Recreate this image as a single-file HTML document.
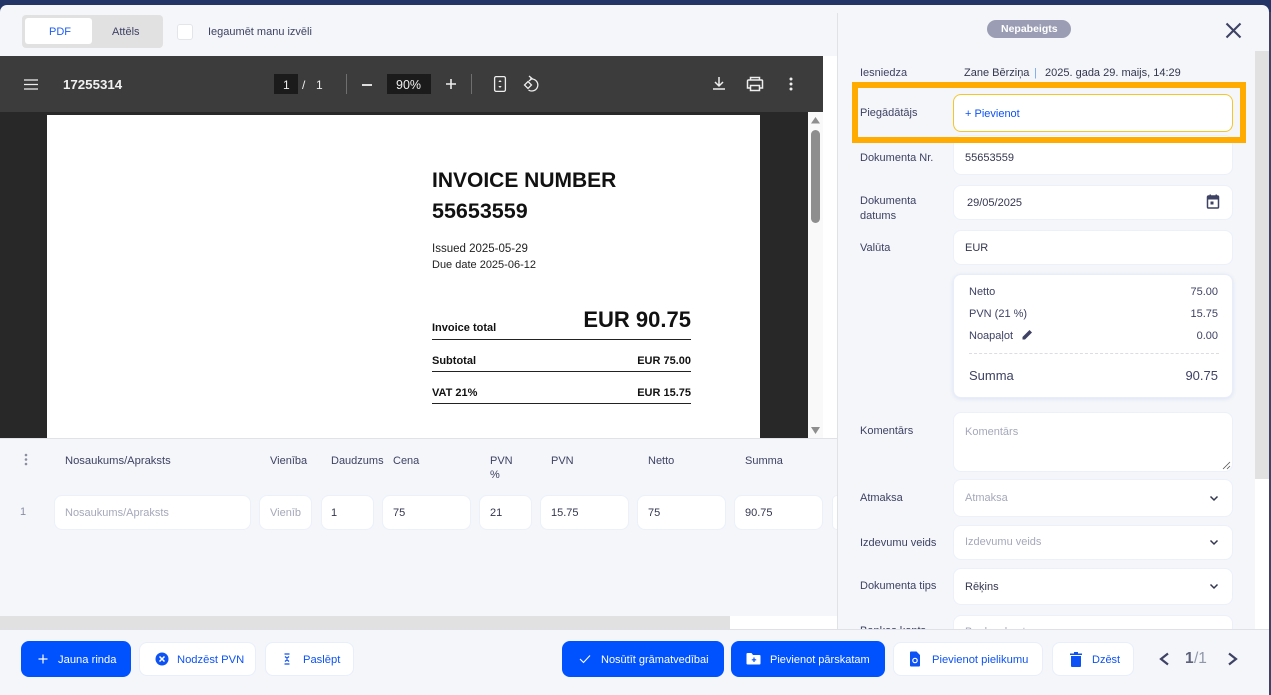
<!DOCTYPE html>
<html lang="lv"><head><meta charset="utf-8"><title>Rēķins</title>
<style>
html,body{margin:0;padding:0}
body{width:1271px;height:695px;overflow:hidden;background:#233466;position:relative;font-family:"Liberation Sans",sans-serif;font-size:11px;color:#3e4264}
div,span,svg{position:absolute;box-sizing:border-box}
.t{white-space:nowrap;line-height:14px;margin-top:1px}
.n{margin-top:0}
.i{background:#fff;border:1px solid #ebf0fb;border-radius:8px}
.ph{color:#a5a8ba}
.d{color:#33364f}
.b{background:#fff;border:1px solid #e8eefc;border-radius:8px;height:34px;top:642px}
.p{background:#0052ff;border-radius:8px;height:36px;top:641px}
.w{color:#fff;font-weight:400}
.bl{color:#0d52f5}
.inv{font-weight:bold;color:#111;white-space:nowrap}
.ln{background:#222;height:1px;left:432px;width:259px}
</style></head><body>
<div style="left:0;top:5px;width:1269px;height:690px;background:#f4f6f9;border-radius:7px 7px 5px 0"></div>
<div style="left:1269px;top:12px;width:2px;height:683px;background:#3e4264"></div>

<!-- top tabs -->
<div style="left:22px;top:15px;width:141px;height:33px;background:#e1e1e1;border-radius:4px"></div>
<div style="left:25px;top:18px;width:67px;height:26px;background:#fff;border-radius:3px"></div>
<div class="t n" style="left:49px;top:25px;color:#1f5cf5">PDF</div>
<div class="t n" style="left:112px;top:25px">Attēls</div>
<div style="left:177px;top:24px;width:16px;height:16px;background:#fff;border:1px solid #e3e5ea;border-radius:3px"></div>
<div class="t n" style="left:208px;top:25px">Iegaumēt manu izvēli</div>
<div style="left:837px;top:13px;width:1px;height:617px;background:#e0e2e6"></div>

<!-- pdf viewer -->
<div style="left:823px;top:56px;width:14px;height:382px;background:#fff"></div>
<div style="left:0;top:56px;width:823px;height:56px;background:#3c3c3c"></div>
<div style="left:0;top:112px;width:808px;height:326px;background:#282828"></div>
<div style="left:808px;top:112px;width:15px;height:326px;background:#f9f9f9"></div>
<svg style="left:808px;top:112px" width="15" height="326"><path d="M7.500 5 12 11.500H3z" fill="#8e8e8e"/><rect x="3" y="18" width="9" height="93" rx="4.500" fill="#8e8e8e"/><path d="M3 315h9l-4.500 7z" fill="#8e8e8e"/></svg>
<div style="left:47px;top:115px;width:713px;height:323px;background:#fff"></div>
<svg style="left:24px;top:79px" width="15" height="11"><path d="M0 1h14M0 5.500h14M0 10h14" stroke="#eee" stroke-width="1.300"/></svg>
<div class="t n" style="left:63px;top:78px;color:#f1f1f1;font-weight:bold;font-size:13.300px">17255314</div>
<div style="left:274px;top:74px;width:24px;height:20px;background:#1b1b1b"></div>
<div class="t n" style="left:283px;top:78px;color:#eee;font-size:12px">1</div>
<div class="t n" style="left:302px;top:78px;color:#eee;font-size:12px">/</div>
<div class="t n" style="left:316px;top:78px;color:#eee;font-size:12px">1</div>
<div style="left:346px;top:74px;width:1px;height:20px;background:#6f6f6f"></div>
<div style="left:362px;top:84px;width:10px;height:1.500px;background:#ddd"></div>
<div style="left:387px;top:74px;width:44px;height:20px;background:#1b1b1b"></div>
<div class="t n" style="left:396px;top:78px;color:#eee;font-size:12.500px">90%</div>
<svg style="left:445px;top:78px" width="12" height="12"><path d="M6 1v10M1 6h10" stroke="#eee" stroke-width="1.600"/></svg>
<div style="left:471px;top:74px;width:1px;height:20px;background:#6f6f6f"></div>
<svg style="left:492px;top:75px" width="16" height="18"><rect x="2.600" y="1.600" width="10.800" height="14.800" rx="1.500" fill="none" stroke="#eee" stroke-width="1.300"/><path d="M8 5 6.300 7h3.400zM8 13l-1.700-2h3.400z" fill="#eee"/></svg>
<svg style="left:522px;top:75px" width="20" height="18"><path d="M6 1 9 3.500 6 6" transform="translate(1 0)" fill="none" stroke="#eee" stroke-width="1.300"/><path d="M8 4h2a6 6 0 1 1-3.500 11" fill="none" stroke="#eee" stroke-width="1.300"/><path d="M6 6.500 9.500 10 6 13.500 2.500 10z" fill="none" stroke="#eee" stroke-width="1.300"/></svg>
<svg style="left:712px;top:76px" width="14" height="15"><path d="M7 1v8M3 6l4 4 4-4" fill="none" stroke="#eee" stroke-width="1.500"/><path d="M1 13h12" stroke="#eee" stroke-width="1.500"/></svg>
<svg style="left:746px;top:76px" width="18" height="16"><path d="M4.500 4V1.500h9V4M4.500 12H1.500V5a1 1 0 0 1 1-1h13a1 1 0 0 1 1 1v7h-3M4.500 9.500h9v5h-9z" fill="none" stroke="#eee" stroke-width="1.500"/></svg>
<svg style="left:788px;top:77px" width="6" height="14"><circle cx="3" cy="2" r="1.500" fill="#eee"/><circle cx="3" cy="7" r="1.500" fill="#eee"/><circle cx="3" cy="12" r="1.500" fill="#eee"/></svg>

<!-- invoice -->
<div class="inv" style="left:432px;top:166px;font-size:21px;line-height:30px">INVOICE NUMBER</div>
<div class="inv" style="left:432px;top:196px;font-size:21.500px;line-height:30px">55653559</div>
<div class="t" style="left:432px;top:241px;color:#222;font-size:11.500px">Issued 2025-05-29</div>
<div class="t" style="left:432px;top:257px;color:#222;font-size:11px">Due date 2025-06-12</div>
<div class="inv" style="left:432px;top:322px;font-size:11px">Invoice total</div>
<div class="inv" style="right:580px;top:307px;font-size:22px">EUR 90.75</div>
<div class="ln" style="top:339px"></div>
<div class="inv" style="left:432px;top:355px;font-size:11px">Subtotal</div>
<div class="inv" style="right:580px;top:355px;font-size:11px">EUR 75.00</div>
<div class="ln" style="top:371px"></div>
<div class="inv" style="left:432px;top:387px;font-size:11px">VAT 21%</div>
<div class="inv" style="right:580px;top:387px;font-size:11px">EUR 15.75</div>
<div class="ln" style="top:403px"></div>

<!-- table -->
<div style="left:0;top:438px;width:837px;height:1px;background:#e1e2e5"></div>
<svg style="left:23px;top:453px" width="6" height="14"><circle cx="3" cy="2" r="1.300" fill="#8b8ea3"/><circle cx="3" cy="6.500" r="1.300" fill="#8b8ea3"/><circle cx="3" cy="11" r="1.300" fill="#8b8ea3"/></svg>
<div class="t" style="left:65px;top:453px;font-size:11.200px">Nosaukums/Apraksts</div>
<div class="t" style="left:270px;top:453px">Vienība</div>
<div class="t" style="left:331px;top:453px">Daudzums</div>
<div class="t" style="left:393px;top:453px">Cena</div>
<div class="t" style="left:490px;top:453px">PVN</div>
<div class="t" style="left:490px;top:467px">%</div>
<div class="t" style="left:551px;top:453px">PVN</div>
<div class="t" style="left:648px;top:453px">Netto</div>
<div class="t" style="left:745px;top:453px">Summa</div>
<div class="t" style="left:20px;top:504px;color:#8b8ea3">1</div>
<div class="i" style="left:54px;top:495px;width:197px;height:35px"></div>
<div class="t ph" style="left:65px;top:505px">Nosaukums/Apraksts</div>
<div class="i" style="left:259px;top:495px;width:53px;height:35px"></div>
<div class="t ph" style="left:270px;top:505px">Vienīb</div>
<div class="i" style="left:321px;top:495px;width:53px;height:35px"></div>
<div class="t d" style="left:331px;top:505px">1</div>
<div class="i" style="left:382px;top:495px;width:89px;height:35px"></div>
<div class="t d" style="left:393px;top:505px">75</div>
<div class="i" style="left:479px;top:495px;width:53px;height:35px"></div>
<div class="t d" style="left:490px;top:505px">21</div>
<div class="i" style="left:540px;top:495px;width:89px;height:35px"></div>
<div class="t d" style="left:551px;top:505px">15.75</div>
<div class="i" style="left:637px;top:495px;width:89px;height:35px"></div>
<div class="t d" style="left:648px;top:505px">75</div>
<div class="i" style="left:734px;top:495px;width:89px;height:35px"></div>
<div class="t d" style="left:745px;top:505px">90.75</div>
<div class="i" style="left:832px;top:495px;width:5px;height:35px;border-right:0;border-radius:8px 0 0 8px"></div>
<div style="left:0;top:616px;width:730px;height:13px;background:#e1e1e1"></div>
<div style="left:730px;top:616px;width:107px;height:13px;background:#fff"></div>

<!-- right panel -->
<div style="left:987px;top:20px;width:84px;height:18px;border-radius:9px;background:#9a9db4"></div>
<div class="t n" style="left:1001px;top:22px;color:#fff;font-weight:bold;font-size:10.500px">Nepabeigts</div>
<svg style="left:1225px;top:22px" width="17" height="17"><path d="M1.500 1.500l14 14M15.500 1.500l-14 14" stroke="#3e4264" stroke-width="2.100"/></svg>
<div style="left:1255px;top:51px;width:14px;height:428px;background:#e1e1e1"></div>
<div style="left:1255px;top:479px;width:14px;height:150px;background:#fff"></div>

<div class="t" style="left:860px;top:65px">Iesniedza</div>
<div class="t d" style="left:964px;top:65px">Zane Bērziņa</div>
<div class="t" style="left:1034px;top:65px;color:#7aa7e6">|</div>
<div class="t d" style="left:1045px;top:65px">2025. gada 29. maijs, 14:29</div>
<div class="t" style="left:860px;top:105px">Piegādātājs</div>
<div style="left:953px;top:94px;width:280px;height:38px;background:#fff;border:1px solid #f5c52c;border-radius:8px"></div>
<div class="t" style="left:965px;top:106px;color:#0d52f5">+ Pievienot</div>
<div class="i" style="left:953px;top:135px;width:280px;height:40px"></div>
<div style="left:852px;top:82px;width:394px;height:61px;border:6px solid #ffab00"></div>
<div class="t" style="left:860px;top:150px">Dokumenta Nr.</div>
<div class="t d" style="left:965px;top:150px">55653559</div>
<div class="t" style="left:860px;top:193px">Dokumenta</div>
<div class="t" style="left:860px;top:208px">datums</div>
<div class="i" style="left:953px;top:185px;width:280px;height:35px"></div>
<div class="t d" style="left:967px;top:195px">29/05/2025</div>
<svg style="left:1206px;top:194px" width="14" height="15"><path d="M1.500 3a1 1 0 0 1 1-1h9a1 1 0 0 1 1 1v10a1 1 0 0 1-1 1h-9a1 1 0 0 1-1-1z" fill="none" stroke="#3e4264" stroke-width="1.500"/><path d="M1.500 2h11v3.500h-11zM3.500 0.500h1.500v2h-1.500zM9.500 0.500h1.500v2h-1.500zM4.500 7.500h3v3h-3z" fill="#3e4264"/></svg>
<div class="t" style="left:860px;top:240px">Valūta</div>
<div class="i" style="left:953px;top:230px;width:280px;height:35px"></div>
<div class="t d" style="left:965px;top:240px">EUR</div>

<div style="left:953px;top:274px;width:280px;height:124px;background:#fff;border:1px solid #e7edfb;border-radius:8px;box-shadow:0 1px 4px rgba(70,100,200,.12)"></div>
<div class="t" style="left:969px;top:284px">Netto</div>
<div class="t" style="right:53px;top:284px">75.00</div>
<div class="t" style="left:969px;top:306px">PVN (21 %)</div>
<div class="t" style="right:53px;top:306px">15.75</div>
<div class="t" style="left:969px;top:328px">Noapaļot</div>
<svg style="left:1022px;top:329px" width="11" height="11"><path d="M0.500 10.500V8L7.500 1l2.500 2.500-7 7z" fill="#3e4264"/></svg>
<div class="t" style="right:53px;top:328px">0.00</div>
<div style="left:969px;top:353px;width:250px;height:0;border-top:1px dashed #dcdde2"></div>
<div class="t" style="left:969px;top:368px;font-size:13px">Summa</div>
<div class="t" style="right:53px;top:368px;font-size:13px">90.75</div>

<div class="t" style="left:860px;top:423px">Komentārs</div>
<div class="i" style="left:953px;top:412px;width:280px;height:60px"></div>
<div class="t ph" style="left:965px;top:424px">Komentārs</div>
<svg style="left:1222px;top:461px" width="9" height="9"><path d="M1 8 8 1M5 8l3-3" stroke="#555" stroke-width="0.800"/></svg>

<div class="t" style="left:860px;top:490px">Atmaksa</div>
<div class="i" style="left:953px;top:479px;width:280px;height:38px"></div>
<div class="t ph" style="left:965px;top:490px">Atmaksa</div>
<div class="t" style="left:860px;top:535px">Izdevumu veids</div>
<div class="i" style="left:953px;top:525px;width:280px;height:35px"></div>
<div class="t ph" style="left:965px;top:534px">Izdevumu veids</div>
<div class="t" style="left:860px;top:578px">Dokumenta tips</div>
<div class="i" style="left:953px;top:568px;width:280px;height:37px"></div>
<div class="t d" style="left:965px;top:579px">Rēķins</div>
<svg style="left:1209px;top:495px" width="10" height="7"><path d="M1.500 1.500 5 5l3.500-3.500" fill="none" stroke="#33364f" stroke-width="1.500"/></svg>
<svg style="left:1209px;top:539px" width="10" height="7"><path d="M1.500 1.500 5 5l3.500-3.500" fill="none" stroke="#33364f" stroke-width="1.500"/></svg>
<svg style="left:1209px;top:583px" width="10" height="7"><path d="M1.500 1.500 5 5l3.500-3.500" fill="none" stroke="#33364f" stroke-width="1.500"/></svg>
<div class="t" style="left:860px;top:623px">Bankas konts</div>
<div class="i" style="left:953px;top:615px;width:280px;height:36px"></div>
<div class="t ph" style="left:965px;top:624px">Bankas konts</div>

<!-- footer -->
<div style="left:0;top:629px;width:1269px;height:66px;background:#f4f6f9;border-top:1px solid #dfe1e6"></div>
<div class="p" style="left:21px;width:110px"></div>
<svg style="left:37px;top:653px" width="12" height="12"><path d="M6 1.500v9M1.500 6h9" stroke="#fff" stroke-width="1.200"/></svg>
<div class="t w" style="left:58px;top:652px;font-size:11.200px">Jauna rinda</div>
<div class="b" style="left:139px;width:117px"></div>
<svg style="left:155px;top:652px" width="14" height="14"><circle cx="7" cy="7" r="6.500" fill="#0d52f5"/><path d="M4.500 4.500l5 5M9.500 4.500l-5 5" stroke="#fff" stroke-width="1.500"/></svg>
<div class="t bl" style="left:177px;top:652px;font-size:11.200px">Nodzēst PVN</div>
<div class="b" style="left:265px;width:89px"></div>
<svg style="left:282px;top:653px" width="10" height="12"><path d="M2.500 1h5M2.500 11h5" stroke="#0d52f5" stroke-width="1.200"/><path d="M3 3.500 5 5.200l2-1.700M3 8.500 5 6.800l2 1.700" fill="none" stroke="#0d52f5" stroke-width="1.200"/></svg>
<div class="t bl" style="left:303px;top:652px;font-size:11.200px">Paslēpt</div>
<div class="p" style="left:562px;width:162px"></div>
<svg style="left:578px;top:653px" width="14" height="12"><path d="M2 6l3.500 3.500L12 2.500" fill="none" stroke="#fff" stroke-width="1.100"/></svg>
<div class="t w" style="left:601px;top:652px">Nosūtīt grāmatvedībai</div>
<div class="p" style="left:731px;width:154px"></div>
<svg style="left:746px;top:652px" width="15" height="13"><path d="M0.500 2a1 1 0 0 1 1-1h4l1.500 2h6.500a1 1 0 0 1 1 1v7.500a1 1 0 0 1-1 1h-12a1 1 0 0 1-1-1z" fill="#fff"/><path d="M8 5.500v4.500M5.800 7.800h4.400" stroke="#0052ff" stroke-width="1.200"/></svg>
<div class="t w" style="left:770px;top:652px">Pievienot pārskatam</div>
<div class="b" style="left:893px;width:150px"></div>
<svg style="left:909px;top:651px" width="12" height="16"><path d="M1 1.500a1 1 0 0 1 1-1h5.500L11 4v10.500a1 1 0 0 1-1 1H2a1 1 0 0 1-1-1z" fill="#0d52f5"/><circle cx="6" cy="9.500" r="2.200" fill="none" stroke="#fff" stroke-width="1.200"/></svg>
<div class="t bl" style="left:932px;top:652px;font-size:11.200px">Pievienot pielikumu</div>
<div class="b" style="left:1052px;width:82px"></div>
<svg style="left:1069px;top:651px" width="14" height="16"><path d="M1 2.500h12v1.500H1zM5 1h4v1.500H5zM2 5h10v10a1 1 0 0 1-1 1H3a1 1 0 0 1-1-1z" fill="#0d52f5"/></svg>
<div class="t bl" style="left:1092px;top:652px">Dzēst</div>
<svg style="left:1158px;top:652px" width="12" height="14"><path d="M10 1.500 3 7l7 5.500" fill="none" stroke="#3e4264" stroke-width="2.200"/></svg>
<div class="t" style="left:1185px;top:651px;font-size:15.500px;font-weight:bold;color:#5e617c">1</div>
<div class="t" style="left:1194px;top:651px;font-size:15.500px;color:#8f97ab">/1</div>
<svg style="left:1227px;top:652px" width="12" height="14"><path d="M2 1.500 9 7l-7 5.500" fill="none" stroke="#3e4264" stroke-width="2.200"/></svg>
</body></html>
